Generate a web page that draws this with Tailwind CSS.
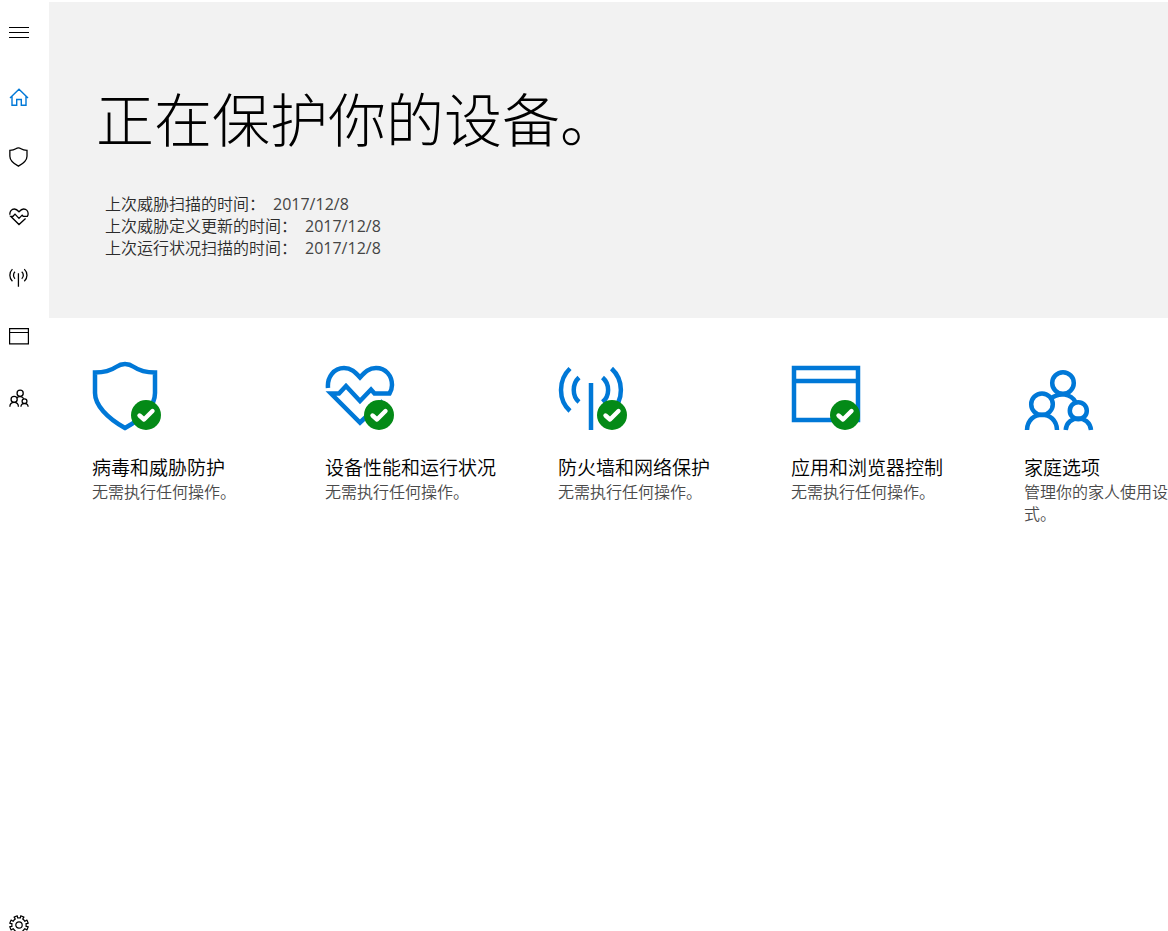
<!DOCTYPE html>
<html lang="zh-CN">
<head>
<meta charset="utf-8">
<meta name="viewport" content="width=device-width, initial-scale=1">
<title>安全中心</title>
<script src="https://cdn.jsdelivr.net/npm/@tailwindcss/browser@4"></script>
</head>
<body class="bg-white text-black font-['Noto_Sans','Noto_Sans_CJK_SC',sans-serif] font-[350]">

<svg class="hidden" aria-hidden="true">
  <symbol id="shield" viewBox="0 0 70 72">
    <path d="M3 12.500C13 12.500 19 10.500 24 7C27 5 30 4 33 4C36 4 39 5 42 7C47 10.500 53 12.500 63 12.500V33C63 47 51 58 33 68C15 58 3 45 3 33Z"/>
  </symbol>
  <symbol id="heart" viewBox="0 0 70 72">
    <path d="M3 28C2 17 9 8 19 8C26 8 30 12 35 17.500C40 12 44 8 51 8C61 8 67 16 67 25C67 29 66 31 64.500 33.500H49.500L46 29.500L35 41L21 26L14 33.500H6L35 62.500L58 41"/>
  </symbol>
  <symbol id="antenna" viewBox="0 0 70 72">
    <path d="M33 23V70M12 8.500C0 20 0 40 12 51M21 17.500C14 24 14 36 21 42M53.500 8.500C66 20 66 40 53.500 51M44.500 17.500C52 24 52 36 44.500 42"/>
  </symbol>
  <symbol id="window" viewBox="0 0 70 72">
    <path d="M3 8H67V60H3ZM3 21H67"/>
  </symbol>
  <symbol id="family" viewBox="0 0 70 72">
    <circle cx="39" cy="23" r="10.800"/>
    <circle cx="18" cy="44.300" r="10.800"/>
    <circle cx="54.300" cy="50.700" r="8.500"/>
    <path d="M3 70C3.500 49.500 32.500 49.500 33 70M41.700 70C43 54.500 65.500 54.500 67 70M27 38.500C35 32 47 33.500 51.500 42"/>
  </symbol>
  <symbol id="ok" viewBox="0 0 70 72">
    <circle cx="54" cy="55" r="15" fill="#048a17" stroke="none"/>
    <path d="M47.500 55.500L52 59.500L60.500 51" fill="none" stroke="#fff" stroke-width="4.400" stroke-linecap="round" stroke-linejoin="round"/>
  </symbol>
</svg>

<div class="flex h-screen overflow-hidden pt-0.5">
  <nav class="flex w-[49px] shrink-0 flex-col" aria-label="导航">
    <button type="button" aria-label="菜单" class="mb-[5px] flex h-15 items-center pl-[9px]">
      <svg class="size-5" viewBox="0 0 20 20" fill="none" stroke="currentColor"><path d="M0 5.500H20M0 10.500H20M0 15.500H20"/></svg>
    </button>
    <a href="#home" aria-label="主页" class="flex h-15 items-center pl-[9px] text-[#0078d7]">
      <svg class="size-5" viewBox="0 0 20 20" fill="none" stroke="currentColor" stroke-width="1.400"><path d="M1 11L10 2.200L19 11M3 9.500V18.300H7.700V12.500H12.300V18.300H17V9.500"/></svg>
    </a>
    <a href="#virus" aria-label="病毒和威胁防护" class="flex h-15 items-center pl-[9px]">
      <svg class="h-[22px] w-5 fill-none stroke-current stroke-[4.5px]"><use href="#shield"/></svg>
    </a>
    <a href="#health" aria-label="设备性能和运行状况" class="flex h-15 items-center pl-[9px]">
      <svg class="h-[22px] w-5 fill-none stroke-current stroke-[4.5px]"><use href="#heart"/></svg>
    </a>
    <a href="#firewall" aria-label="防火墙和网络保护" class="flex h-15 items-center pl-[9px]">
      <svg class="h-[22px] w-5 fill-none stroke-current stroke-[4.5px]"><use href="#antenna"/></svg>
    </a>
    <a href="#apps" aria-label="应用和浏览器控制" class="flex h-15 items-center pl-[9px]">
      <svg class="size-5" viewBox="0 0 20 20" fill="none" stroke="currentColor" stroke-width="1.200"><path d="M.600 1.600H19.400V16.900H.600ZM.600 5.500H19.400"/></svg>
    </a>
    <a href="#family-options" aria-label="家庭选项" class="flex h-15 items-center pl-[9px]">
      <svg class="h-[22px] w-5 fill-none stroke-current stroke-[4.5px]"><use href="#family"/></svg>
    </a>
    <a href="#settings" aria-label="设置" class="-mb-6 mt-auto flex h-15 shrink-0 items-center pl-[9px]">
      <svg class="size-5" viewBox="0 0 20 20" fill="none" stroke="currentColor" stroke-width="1.200" stroke-linejoin="round">
        <circle cx="10" cy="10" r="3.200"/>
        <path d="M8.600 3L8.300 .800L5.100 2.100L6.300 4.100Q5 5 4.100 6.300L2.100 5.100L.800 8.300L3 8.600Q2.700 10 3 11.400L.800 11.700L2.100 14.900L4.100 13.700Q5 15 6.300 15.900L5.100 17.900L8.300 19.200L8.600 17Q10 17.300 11.400 17L11.700 19.200L14.900 17.900L13.700 15.900Q15 15 15.900 13.700L17.900 14.900L19.200 11.700L17 11.400Q17.300 10 17 8.600L19.200 8.300L17.900 5.100L15.900 6.300Q15 5 13.700 4.100L14.900 2.100L11.700 .800L11.400 3Q10 2.700 8.600 3Z"/>
      </svg>
    </a>
  </nav>

  <main class="min-w-0 flex-1 overflow-hidden">
    <header class="h-[316px] bg-[#f2f2f2] pt-[78px]">
      <h1 class="pl-[47px] text-[58px] leading-20 font-light">正在保护你的设备。</h1>
      <div class="pt-[33px] pl-14 text-base leading-[22px] text-[#2b2b2b]">
        <p class="flex gap-2">上次威胁扫描的时间：<span class="font-['Open_Sans'] text-[#444] font-normal">2017/12/8</span></p>
        <p class="flex gap-2">上次威胁定义更新的时间：<span class="font-['Open_Sans'] text-[#444] font-normal">2017/12/8</span></p>
        <p class="flex gap-2">上次运行状况扫描的时间：<span class="font-['Open_Sans'] text-[#444] font-normal">2017/12/8</span></p>
      </div>
    </header>

    <div class="flex pt-[42px] pl-[43px]">
      <a href="#virus" class="block w-[233px] shrink-0">
        <svg class="h-[72px] w-[70px] fill-none stroke-[#0078d7] stroke-[4.5px]" aria-hidden="true"><use href="#shield"/><use href="#ok"/></svg>
        <h2 class="mt-6 pb-px text-[19px] leading-6">病毒和威胁防护</h2>
        <p class="w-[200px] text-base leading-[22px] text-[#4a4a4a]">无需执行任何操作。</p>
      </a>
      <a href="#health" class="block w-[233px] shrink-0">
        <svg class="h-[72px] w-[70px] fill-none stroke-[#0078d7] stroke-[4.5px]" aria-hidden="true"><use href="#heart"/><use href="#ok"/></svg>
        <h2 class="mt-6 pb-px text-[19px] leading-6">设备性能和运行状况</h2>
        <p class="w-[200px] text-base leading-[22px] text-[#4a4a4a]">无需执行任何操作。</p>
      </a>
      <a href="#firewall" class="block w-[233px] shrink-0">
        <svg class="h-[72px] w-[70px] fill-none stroke-[#0078d7] stroke-[4.5px]" aria-hidden="true"><use href="#antenna"/><use href="#ok"/></svg>
        <h2 class="mt-6 pb-px text-[19px] leading-6">防火墙和网络保护</h2>
        <p class="w-[200px] text-base leading-[22px] text-[#4a4a4a]">无需执行任何操作。</p>
      </a>
      <a href="#apps" class="block w-[233px] shrink-0">
        <svg class="h-[72px] w-[70px] fill-none stroke-[#0078d7] stroke-[4.5px]" aria-hidden="true"><use href="#window"/><use href="#ok"/></svg>
        <h2 class="mt-6 pb-px text-[19px] leading-6">应用和浏览器控制</h2>
        <p class="w-[200px] text-base leading-[22px] text-[#4a4a4a]">无需执行任何操作。</p>
      </a>
      <a href="#family-options" class="block w-[233px] shrink-0">
        <svg class="h-[72px] w-[70px] fill-none stroke-[#0078d7] stroke-[4.5px]" aria-hidden="true"><use href="#family"/></svg>
        <h2 class="mt-6 pb-px text-[19px] leading-6">家庭选项</h2>
        <p class="w-[200px] text-base leading-[22px] text-[#4a4a4a]">管理你的家人使用设备的方式。</p>
      </a>
    </div>
  </main>
</div>
</body>
</html>
